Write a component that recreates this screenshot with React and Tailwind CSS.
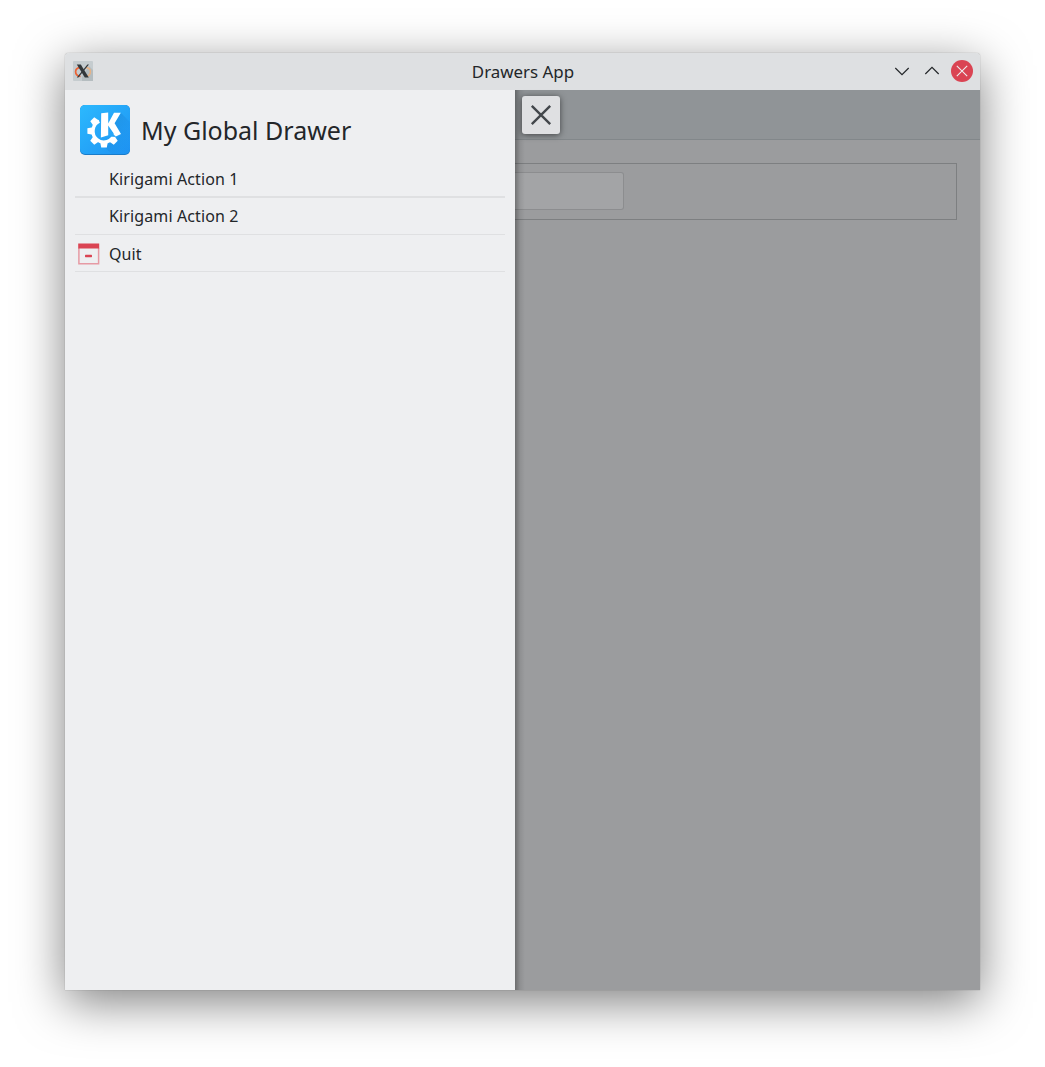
import React from "react";

const font = "font-['Noto_Sans',sans-serif]";

function XLogo() {
  return (
    <svg className="mb-px h-5 w-5" viewBox="0 0 20 20">
      <rect width="20" height="20" rx="1" fill="#c5cccf" />
      <path d="M9 16L16 5L20 9V20H9Z" fill="#b5bdc0" />
      <path d="M7 6.4C4 7 2.6 8.8 2.6 10.8C2.6 13.2 4.2 15 7.5 15.5" fill="none" stroke="#ec6234" strokeWidth="1.7" />
      <path d="M13 6.4C16 6.8 17.4 8.6 17.4 10.7C17.4 13 15.5 15.2 12 15.5" fill="none" stroke="#e9b284" strokeWidth="1.5" />
      <path d="M3.8 3.5H7.8L15.8 16.5H11.8Z" fill="#33383b" />
      <path d="M14.4 3.5H16L5.4 16.5H3.8Z" fill="#33383b" />
    </svg>
  );
}

function KdeLogo() {
  return (
    <svg className="h-[50px] w-[50px] shrink-0" viewBox="0 0 50 50">
      <defs>
        <linearGradient id="tile" x1="0" y1="0" x2="1" y2="1">
          <stop offset="0" stopColor="#2cb9fe" />
          <stop offset="1" stopColor="#1d92f2" />
        </linearGradient>
        <linearGradient id="shade" x1="0" y1="0" x2="1" y2="1">
          <stop offset="0" stopColor="#1879c4" stopOpacity="0.6" />
          <stop offset="1" stopColor="#1d8ff0" stopOpacity="0" />
        </linearGradient>
      </defs>
      <rect width="50" height="50" rx="5" fill="#1a7cc9" />
      <rect width="50" height="49" rx="5" fill="url(#tile)" />
      <path d="M41 8L50 17V44Q50 49 45 49H32L24 42L36 35L41 29L34 19Z" fill="url(#shade)" />
      <g fill="#fff">
        <path d="M21.2 42.6L20.2 37H27.8L26.8 42.6Z" />
        <path d="M21.2 42.6L20.2 37H27.8L26.8 42.6Z" transform="rotate(45 24 26)" />
        <path d="M21.2 42.6L20.2 37H27.8L26.8 42.6Z" transform="rotate(90 24 26)" />
        <path d="M21.2 42.6L20.2 37H27.8L26.8 42.6Z" transform="rotate(135 24 26)" />
        <path d="M21.2 42.6L20.2 37H27.8L26.8 42.6Z" transform="rotate(-45 24 26)" />
      </g>
      <path d="M19.2 16.3A10.9 10.9 0 1 0 34.4 29" fill="none" stroke="#fff" strokeWidth="3.4" />
      <path d="M20 8H29V24L36 32L29 31.5L20 33.8Z" fill="#27a6f8" />
      <path d="M21.2 8.3L28.2 7.6V18.6L34 7.8H40.8L34.6 18.2L41 28.9L35.8 31.4L28.2 20.4V30.2L20.9 32.4Z" fill="#fff" />
    </svg>
  );
}

function QuitIcon() {
  return (
    <svg className="h-[22px] w-[22px]" viewBox="0 0 22 22">
      <path d="M0.9 5V20.7H20.6V5" fill="none" stroke="#e69aa4" strokeWidth="1.5" />
      <rect x="0.2" y="0.5" width="21" height="5" fill="#da4453" />
      <rect x="7" y="11.7" width="7" height="2.5" rx="0.6" fill="#da4453" />
    </svg>
  );
}

function Action({ label, icon, className }) {
  return (
    <li className={"flex items-center border-[#dfe0e2] pl-[3px] " + className}>
      <span className="mr-[9px] w-[22px] shrink-0">{icon}</span>
      <span>{label}</span>
    </li>
  );
}

export default function App() {
  return (
    <div className={"h-[1067px] w-[1045px] overflow-hidden bg-white px-[65px] pt-[53px] text-[#232629] " + font}>
      <div className="flex h-[937px] w-[915px] flex-col rounded-t-[4px] shadow-[0_0_1px_rgba(0,0,0,0.5),0_12px_48px_rgba(0,0,0,0.5)]">
        <header className="grid h-[37px] shrink-0 grid-cols-[1fr_auto_1fr] items-center rounded-t-[4px] bg-[#dee0e2] pr-[7px] pl-2">
          <XLogo />
          <h1 className="text-[16.9px] leading-[22px]">Drawers App</h1>
          <div className="flex items-center justify-end gap-2 pb-px">
            <svg className="h-[22px] w-[22px]" viewBox="0 0 22 22" fill="none" stroke="#232629" strokeWidth="1.2">
              <path d="M4.3 8L11 14.7L17.7 8" />
            </svg>
            <svg className="h-[22px] w-[22px]" viewBox="0 0 22 22" fill="none" stroke="#232629" strokeWidth="1.2">
              <path d="M4.3 14L11 7.3L17.7 14" />
            </svg>
            <svg className="h-[22px] w-[22px]" viewBox="0 0 22 22" fill="none">
              <circle cx="11" cy="11" r="11" fill="#da4453" />
              <path d="M5.8 5.8L16.2 16.2M16.2 5.8L5.8 16.2" stroke="#eff0f1" strokeWidth="1.1" />
            </svg>
          </div>
        </header>
        <div className="flex min-h-0 flex-1">
          <aside className="flex w-[450px] shrink-0 flex-col bg-[#eeeff1]">
            <div className="flex h-[71px] items-end gap-[11px] px-[15px] pb-[6px]">
              <KdeLogo />
              <h2 className="pb-2 text-[25px] leading-[34px] whitespace-nowrap">My Global Drawer</h2>
            </div>
            <ul className="mx-[10px] text-[16px] leading-[22px] tracking-[0.12px]">
              <Action label="Kirigami Action 1" className="h-[37px] border-b-2" />
              <Action label="Kirigami Action 2" className="h-[37px] border-b" />
              <Action label="Quit" icon={<QuitIcon />} className="h-[37px] border-b pt-[2px]" />
            </ul>
          </aside>
          <main className="relative flex flex-1 flex-col bg-[#9b9c9e]">
            <div className="flex h-[50px] shrink-0 items-start border-b border-[#82878a] bg-[#909497] pt-[6px] pl-[7px]">
              <button className="z-10 flex h-[38px] w-[38px] items-center justify-center rounded-[3px] bg-[#dfe0e2] shadow-[0_1px_6px_rgba(0,0,0,0.55)]">
                <svg className="h-[22px] w-[22px]" viewBox="0 0 22 22" fill="none" stroke="#43474b" strokeWidth="2.4">
                  <path d="M1.8 1.8L20.2 20.2M20.2 1.8L1.8 20.2" />
                </svg>
              </button>
            </div>
            <div className="mt-[23px] mr-[23px] flex h-[57px] items-start border-y border-r border-[#7d7f81] pt-2">
              <div className="h-[37.5px] w-[109.4px] rounded-r-[3px] border-y border-r border-[#8c8d8f] bg-[#a3a4a6]" />
            </div>
            <div className="pointer-events-none absolute inset-y-0 left-0 w-[10px] bg-linear-to-r from-black/30 via-black/8 to-transparent" />
          </main>
        </div>
      </div>
    </div>
  );
}
